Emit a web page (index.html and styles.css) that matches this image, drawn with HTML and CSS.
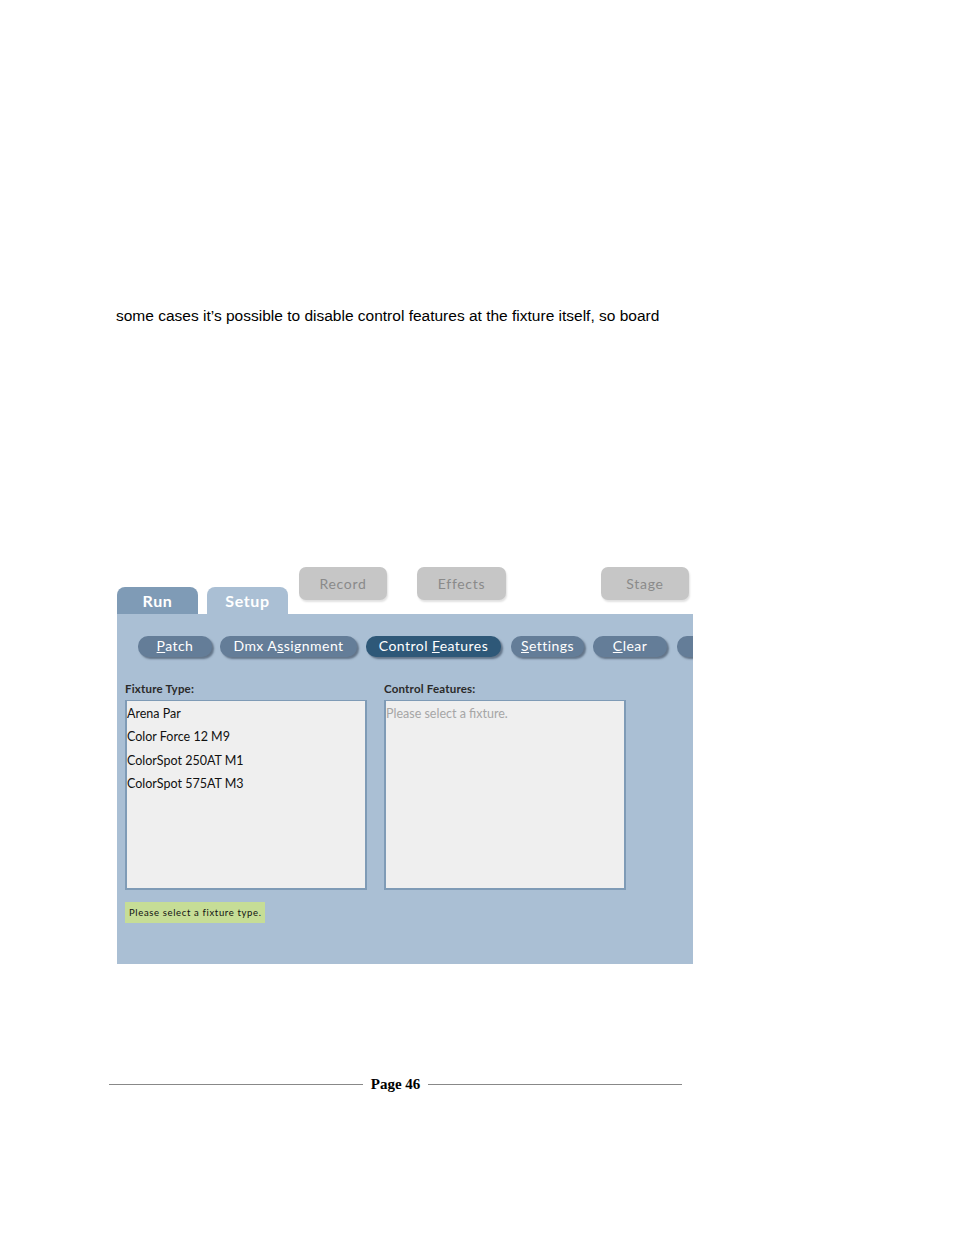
FILE: index.html
```html
<!DOCTYPE html>
<html>
<head>
<meta charset="utf-8">
<link rel="stylesheet" href="styles.css">
</head>
<body>
<div class="page">
  <p class="para">some cases it’s possible to disable control features at the fixture itself, so board</p>

  <div class="shot">
    <div class="topbar">
      <div class="tab tab-run">Run</div>
      <div class="tab tab-setup">Setup</div>
      <div class="gbtn gbtn-record">Record</div>
      <div class="gbtn gbtn-effects">Effects</div>
      <div class="gbtn gbtn-stage">Stage</div>
    </div>
    <div class="panel">
      <div class="btnrow">
        <div class="sbtn w-patch"><u>P</u>atch</div>
        <div class="sbtn w-dmx">Dmx A<u>s</u>signment</div>
        <div class="sbtn sbtn-active w-cf">Control <u>F</u>eatures</div>
        <div class="sbtn w-set"><u>S</u>ettings</div>
        <div class="sbtn w-clear"><u>C</u>lear</div>
        <div class="sbtn w-more">&nbsp;</div>
      </div>
      <div class="cols">
        <div class="col">
          <div class="label">Fixture Type:</div>
          <div class="listbox">
            <div class="item">Arena Par</div>
            <div class="item">Color Force 12 M9</div>
            <div class="item">ColorSpot 250AT M1</div>
            <div class="item">ColorSpot 575AT M3</div>
          </div>
        </div>
        <div class="col">
          <div class="label">Control Features:</div>
          <div class="listbox">
            <div class="item placeholder">Please select a fixture.</div>
          </div>
        </div>
      </div>
      <div class="status">Please select a fixture type.</div>
    </div>
  </div>

  <div class="footer">
    <span class="rule"></span>
    <span class="pagenum">Page 46</span>
    <span class="rule"></span>
  </div>
</div>
</body>
</html>
```

FILE: styles.css
```css
html, body {
  margin: 0;
  padding: 0;
  background: #ffffff;
}

.page {
  padding-top: 306px;
}

.para {
  margin: 0 0 0 116px;
  font-family: "Liberation Sans", Arial, sans-serif;
  font-size: 15.5px;
  line-height: 20px;
  color: #000;
}

.shot {
  margin: 234px 0 0 117px;
  width: 576px;
  font-family: "Lato", "Liberation Sans", sans-serif;
}

.topbar {
  display: flex;
  height: 54px;
}

.tab {
  align-self: flex-end;
  width: 81px;
  height: 27px;
  border-radius: 8px 8px 0 0;
  color: #ffffff;
  font-weight: bold;
  font-size: 16px;
  letter-spacing: 0.6px;
  text-align: center;
  line-height: 28px;
  box-sizing: border-box;
}

.tab-run {
  background: #7f9bb6;
}

.tab-setup {
  margin-left: 9px;
  background: #aabfd4;
}

.gbtn {
  align-self: flex-start;
  margin-top: 7px;
  height: 33px;
  background: #c6c6c6;
  border-radius: 7px;
  color: #8a8a8a;
  font-size: 14px;
  letter-spacing: 0.7px;
  text-align: center;
  line-height: 34px;
  box-shadow: 1px 2px 2px rgba(0, 0, 0, 0.12);
}

.gbtn-record {
  margin-left: 11px;
  width: 88px;
}

.gbtn-effects {
  margin-left: 30px;
  width: 89px;
}

.gbtn-stage {
  margin-left: 95px;
  width: 88px;
}

.panel {
  height: 350px;
  background: #aabfd4;
  overflow: hidden;
  box-sizing: border-box;
  padding: 22px 0 0 8px;
}

.btnrow {
  display: flex;
  margin-left: 13px;
  height: 21px;
  white-space: nowrap;
}

.sbtn {
  flex: none;
  height: 21px;
  border-radius: 10px;
  background: #647d98;
  color: #ffffff;
  font-size: 14px;
  letter-spacing: 0.45px;
  line-height: 20px;
  text-align: center;
  box-shadow: 2px 2px 2px rgba(40, 55, 75, 0.55);
  margin-right: 9px;
}

.sbtn-active {
  background: #2e5878;
}

.w-patch { width: 74px; margin-right: 8px; }
.w-dmx { width: 137px; }
.w-cf { width: 135px; margin-right: 10px; }
.w-set { width: 73px; }
.w-clear { width: 74px; margin-right: 10px; }
.w-more { width: 60px; }

.cols {
  display: flex;
  gap: 17px;
  margin-top: 26px;
}

.col {
  width: 242px;
}

.label {
  font-size: 11.5px;
  font-weight: bold;
  color: #2a2a2a;
  height: 17px;
  line-height: 12px;
  letter-spacing: 0.2px;
}

.listbox {
  height: 190px;
  box-sizing: border-box;
  background: #efefef;
  border: 1px solid #7f9bb6;
  border-width: 1px 2px 2px 2px;
  padding-top: 6px;
}

.item {
  font-size: 12.5px;
  letter-spacing: 0;
  color: #111;
  height: 23.3px;
  line-height: 14px;
}

.placeholder {
  color: #a6a6a6;
}

.status {
  margin-top: 12px;
  width: 140px;
  height: 21px;
  background: #c6dd96;
  font-size: 9.5px;
  line-height: 21px;
  color: #111;
  padding-left: 4px;
  box-sizing: border-box;
  letter-spacing: 0.65px;
  white-space: nowrap;
}

.footer {
  display: flex;
  align-items: center;
  margin: 110px 0 0 109px;
  width: 573px;
}

.rule {
  flex: 1;
  height: 1px;
  background: #888888;
}

.pagenum {
  font-family: "Liberation Serif", "DejaVu Serif", serif;
  font-weight: bold;
  font-size: 15px;
  padding: 0 8px;
  line-height: 20px;
}
```
